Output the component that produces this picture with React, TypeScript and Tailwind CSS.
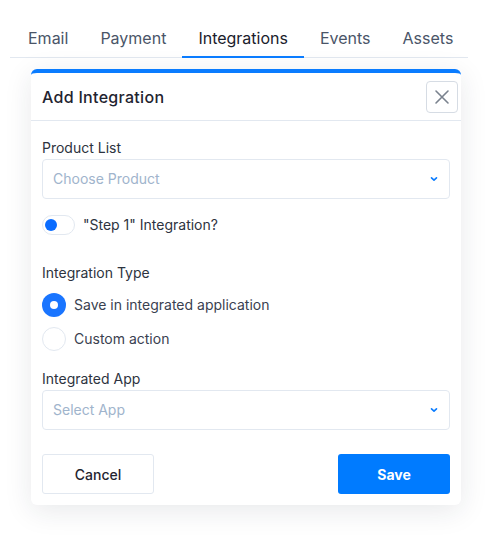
import React from "react";

const tabs = ["Email", "Payment", "Integrations", "Events", "Assets"];

function Chevron() {
  return (
    <svg width="8" height="6" viewBox="0 0 8 6" fill="none">
      <path d="M1.5 1.8 L4 4.2 L6.5 1.8" stroke="#0a7cff" strokeWidth="1.6" strokeLinecap="round" strokeLinejoin="round" />
    </svg>
  );
}

function Select({ placeholder }: { placeholder: string }) {
  return (
    <div className="mt-[2px] flex h-[40px] items-center justify-between rounded-[4px] border border-[#e2e8f0] pl-[10px] pr-[11px] text-[14px] leading-[20px] text-[#a0b4cc]">
      <span>{placeholder}</span>
      <Chevron />
    </div>
  );
}

export default function App() {
  return (
    <div className="min-h-[537px] w-[491px] bg-white pt-[27px] font-['Inter',sans-serif]">
      <div className="ml-[10px] flex w-[458px] border-b border-[#e2e8f0] pl-[2px]">
        {tabs.map((t) => (
          <div
            key={t}
            className={
              t === "Integrations"
                ? "-mb-px border-b-2 border-[#0a7cff] px-4 pb-[7px] text-[16px] leading-[22px] text-[#1a202c]"
                : "-mb-px border-b-2 border-transparent px-4 pb-[7px] text-[16px] leading-[22px] text-[#4a5568]"
            }
          >
            {t}
          </div>
        ))}
      </div>

      <div className="ml-[31px] mt-[11px] w-[430px] overflow-hidden rounded-[6px] border-t-4 border-[#0a7cff] bg-white shadow-[0_6px_28px_rgba(30,40,60,0.10)]">
        <div className="flex h-[48px] items-center justify-between border-b border-[#e2e8f0] pl-[11px] pr-[3px]">
          <span className="text-[16px] font-medium tracking-[0.3px] text-[#1f2430]">Add Integration</span>
          <button className="flex h-[32px] w-[32px] items-center justify-center rounded-[4px] border border-[#d6dce4] bg-white">
            <svg width="16" height="16" viewBox="0 0 16 16" fill="none">
              <path d="M2 2 L14 14 M14 2 L2 14" stroke="#7a828e" strokeWidth="1.6" strokeLinecap="round" />
            </svg>
          </button>
        </div>

        <div className="px-[11px] pb-[11px] pt-[18px]">
          <div className="text-[14px] leading-[18px] text-[#2d3340]">Product List</div>
          <Select placeholder="Choose Product" />

          <div className="mt-[16px] flex h-[20px] items-center gap-[8px]">
            <div className="flex h-[20px] w-[33px] items-center rounded-full border border-[#e2e8f0] pl-[2px]">
              <div className="h-[12px] w-[12px] rounded-full bg-[#0a6cff]" />
            </div>
            <span className="text-[14px] leading-[20px] text-[#2d3340]">"Step 1" Integration?</span>
          </div>

          <div className="mt-[29px] text-[14px] leading-[18px] text-[#2d3340]">Integration Type</div>

          <div className="mt-[11px] flex h-[24px] items-center gap-[8px]">
            <div className="flex h-[24px] w-[24px] items-center justify-center rounded-full bg-[#1a75ff]">
              <div className="h-[8px] w-[8px] rounded-full bg-white" />
            </div>
            <span className="text-[14px] leading-[20px] text-[#3a4150]">Save in integrated application</span>
          </div>
          <div className="mt-[10px] flex h-[24px] items-center gap-[8px]">
            <div className="h-[24px] w-[24px] rounded-full border border-[#e2e8f0]" />
            <span className="text-[14px] leading-[20px] text-[#3a4150]">Custom action</span>
          </div>

          <div className="mt-[19px] text-[14px] leading-[18px] text-[#2d3340]">Integrated App</div>
          <Select placeholder="Select App" />

          <div className="mt-[24px] flex justify-between">
            <button className="h-[40px] w-[112px] rounded-[3px] border border-[#e2e8f0] bg-white text-[14px] font-medium text-[#1f2430]">
              Cancel
            </button>
            <button className="h-[40px] w-[112px] rounded-[3px] bg-[#007bff] text-[14px] font-bold text-white">
              Save
            </button>
          </div>
        </div>
      </div>
    </div>
  );
}
